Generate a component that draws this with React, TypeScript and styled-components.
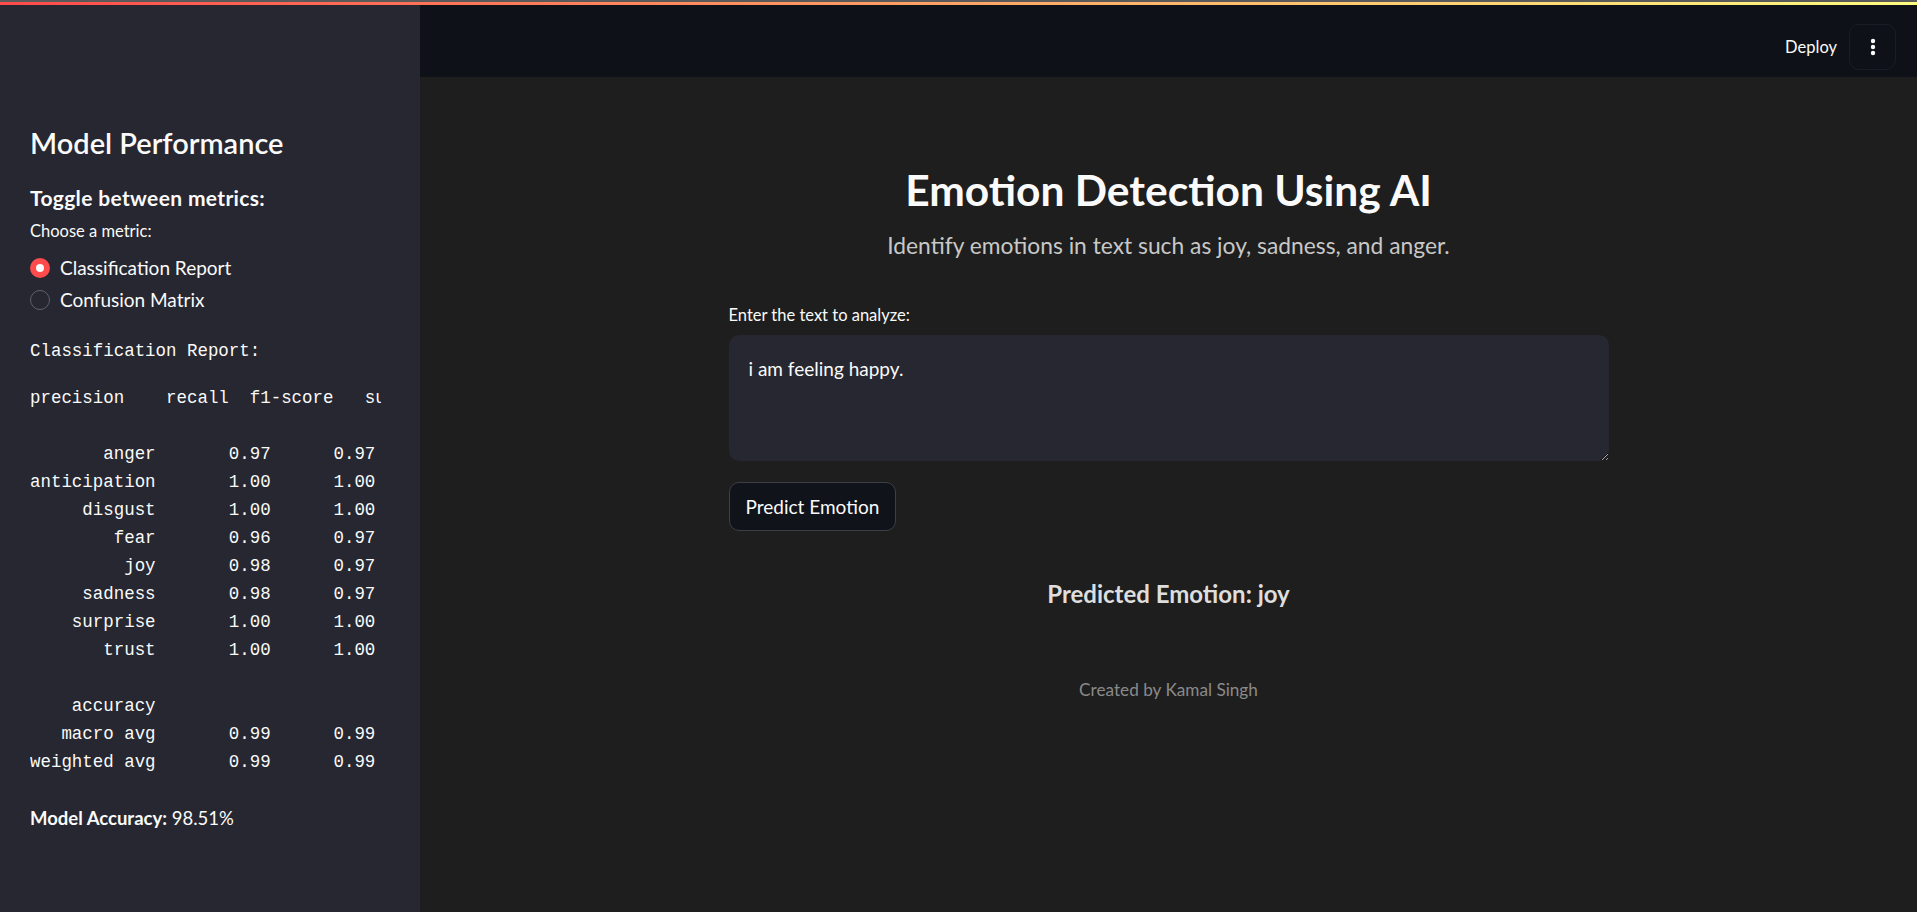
import React, { useState } from "react";
import styled, { createGlobalStyle } from "styled-components";

const GlobalStyle = createGlobalStyle`
  html, body {
    margin: 0;
    padding: 0;
    background: #1e1e1e;
    overflow: hidden;
  }
  * { box-sizing: border-box; }
`;

const SANS = `Lato, "Open Sans", "Noto Sans", sans-serif`;
const MONO = `"Liberation Mono", "DejaVu Sans Mono", monospace`;

const Page = styled.div`
  width: 1917px;
  height: 912px;
  display: flex;
  flex-direction: column;
  font-family: ${SANS};
  color: #fafafa;
`;

const Decoration = styled.div`
  height: 5px;
  flex: 0 0 5px;
  border-top: 2px solid #5a5a5a;
  background: linear-gradient(90deg, #ff4b4b, #fffd80);
`;

const Body = styled.div`
  flex: 1;
  display: flex;
  min-height: 0;
`;

const Sidebar = styled.aside`
  width: 420px;
  flex: 0 0 420px;
  background: #262730;
  padding: 120px 30px 0 30px;
  display: flex;
  flex-direction: column;
`;

const SideTitle = styled.h2`
  margin: 0;
  font-size: 29px;
  line-height: 36px;
  font-weight: 600;
  color: #fafafa;
`;

const SideSubtitle = styled.h3`
  margin: 23px 0 0;
  font-size: 21px;
  line-height: 28px;
  font-weight: 700;
  letter-spacing: 0.35px;
  color: #fafafa;
`;

const FieldLabel = styled.div<{ $top: number }>`
  margin-top: ${(p) => p.$top}px;
  font-size: 16.5px;
  line-height: 22px;
  color: #fafafa;
`;

const RadioGroup = styled.div`
  margin-top: 10px;
  display: flex;
  flex-direction: column;
`;

const RadioOption = styled.label`
  height: 32px;
  display: flex;
  align-items: center;
  gap: 10px;
  cursor: pointer;
`;

const RadioCircle = styled.span<{ $checked: boolean }>`
  width: 20px;
  height: 20px;
  border-radius: 50%;
  flex: 0 0 20px;
  display: flex;
  align-items: center;
  justify-content: center;
  background: ${(p) => (p.$checked ? "#ff4b4b" : "transparent")};
  border: ${(p) => (p.$checked ? "none" : "1.5px solid #5d5f6b")};
  &::after {
    content: "";
    width: 8px;
    height: 8px;
    border-radius: 50%;
    background: #fafafa;
    display: ${(p) => (p.$checked ? "block" : "none")};
  }
`;

const RadioText = styled.span`
  font-size: 19px;
  line-height: 32px;
  color: #fafafa;
`;

const MonoText = styled.div`
  margin-top: 21px;
  font-family: ${MONO};
  font-size: 17.45px;
  line-height: 28px;
  color: #fafafa;
  white-space: pre;
`;

const ReportPre = styled.pre`
  margin: 19px 0 0;
  width: 351px;
  overflow: hidden;
  font-family: ${MONO};
  font-size: 17.45px;
  line-height: 28px;
  color: #fafafa;
  white-space: pre;
`;

const AccuracyLine = styled.p`
  margin: 29px 0 0;
  font-size: 18.5px;
  line-height: 26px;
  color: #fafafa;
  strong { font-weight: 700; }
`;

const Main = styled.main`
  flex: 1;
  display: flex;
  flex-direction: column;
  background: #1e1e1e;
  min-width: 0;
`;

const Header = styled.header`
  height: 72px;
  flex: 0 0 72px;
  background: #0e1117;
  display: flex;
  justify-content: flex-end;
  align-items: flex-start;
  padding: 19px 21px 0 0;
  gap: 12px;
`;

const DeployButton = styled.button`
  height: 46px;
  background: transparent;
  border: none;
  padding: 0;
  font-family: ${SANS};
  font-size: 16.5px;
  line-height: 46px;
  color: #fafafa;
  cursor: pointer;
`;

const MenuButton = styled.button`
  width: 47px;
  height: 46px;
  border-radius: 10px;
  border: 1.5px solid #1a1d25;
  background: #0e1117;
  display: flex;
  align-items: center;
  justify-content: center;
  padding: 0;
  cursor: pointer;
`;

const Content = styled.div`
  width: 880px;
  margin: 0 auto;
  padding-top: 88px;
  display: flex;
  flex-direction: column;
`;

const Title = styled.h1`
  margin: 0;
  text-align: center;
  font-size: 42.5px;
  line-height: 50px;
  font-weight: 700;
  color: #fafafa;
`;

const Subtitle = styled.p`
  margin: 15px 0 0;
  text-align: center;
  font-size: 22.8px;
  line-height: 30px;
  color: #c8c8c8;
`;

const TextArea = styled.textarea`
  margin-top: 9px;
  width: 100%;
  height: 126px;
  border: none;
  outline: none;
  border-radius: 10px;
  background: #262730;
  color: #fafafa;
  padding: 20px;
  font-family: ${SANS};
  font-size: 19px;
  line-height: 28px;
  resize: vertical;
  color-scheme: dark;
`;

const PrimaryRow = styled.div`
  margin-top: 21px;
  display: flex;
`;

const ActionButton = styled.button`
  height: 49px;
  padding: 0 16px;
  border-radius: 10px;
  border: 1px solid #3d3f47;
  background: #10131a;
  color: #fafafa;
  font-family: ${SANS};
  font-size: 19px;
  cursor: pointer;
`;

const Result = styled.h3`
  margin: 47px 0 0;
  text-align: center;
  font-size: 24px;
  line-height: 32px;
  font-weight: 700;
  color: #dedede;
`;

const Footer = styled.p`
  margin: 67px 0 0;
  text-align: center;
  font-size: 17.2px;
  line-height: 26px;
  color: #8a8a8a;
`;

const rows: [string, number, number, number, number][] = [
  ["anger", 0.97, 0.97, 0.97, 541],
  ["anticipation", 1.0, 1.0, 1.0, 498],
  ["disgust", 1.0, 1.0, 1.0, 512],
  ["fear", 0.96, 0.97, 0.96, 534],
  ["joy", 0.98, 0.97, 0.97, 527],
  ["sadness", 0.98, 0.97, 0.97, 519],
  ["surprise", 1.0, 1.0, 1.0, 506],
  ["trust", 1.0, 1.0, 1.0, 493],
];

const padL = (s: string, n: number) => (s.length >= n ? s : " ".repeat(n - s.length) + s);

const line = (name: string, p: number | null, r: number | null, f: number, s: number) =>
  padL(name, 12) +
  " " +
  " " + padL(p === null ? "" : p.toFixed(2), 9) +
  " " + padL(r === null ? "" : r.toFixed(2), 9) +
  " " + padL(f.toFixed(2), 9) +
  " " + padL(String(s), 9);

const total = rows.reduce((a, r) => a + r[4], 0);

const report = [
  "precision    recall  f1-score   support",
  "",
  ...rows.map((r) => line(r[0], r[1], r[2], r[3], r[4])),
  "",
  line("accuracy", null, null, 0.99, total),
  line("macro avg", 0.99, 0.99, 0.99, total),
  line("weighted avg", 0.99, 0.99, 0.99, total),
].join("\n");

export default function App() {
  const [metric, setMetric] = useState("report");
  const [text, setText] = useState("i am feeling happy.");

  return (
    <Page>
      <GlobalStyle />
      <Decoration />
      <Body>
        <Sidebar>
          <SideTitle>Model Performance</SideTitle>
          <SideSubtitle>Toggle between metrics:</SideSubtitle>
          <FieldLabel $top={8}>Choose a metric:</FieldLabel>
          <RadioGroup>
            <RadioOption onClick={() => setMetric("report")}>
              <RadioCircle $checked={metric === "report"} />
              <RadioText>Classification Report</RadioText>
            </RadioOption>
            <RadioOption onClick={() => setMetric("matrix")}>
              <RadioCircle $checked={metric === "matrix"} />
              <RadioText>Confusion Matrix</RadioText>
            </RadioOption>
          </RadioGroup>
          <MonoText>Classification Report:</MonoText>
          <ReportPre>{report}</ReportPre>
          <AccuracyLine>
            <strong>Model Accuracy:</strong> 98.51%
          </AccuracyLine>
        </Sidebar>
        <Main>
          <Header>
            <DeployButton>Deploy</DeployButton>
            <MenuButton aria-label="Main menu">
              <svg width="6" height="18" viewBox="0 0 6 18">
                <circle cx="3" cy="3" r="2.2" fill="#fafafa" />
                <circle cx="3" cy="9" r="2.2" fill="#fafafa" />
                <circle cx="3" cy="15" r="2.2" fill="#fafafa" />
              </svg>
            </MenuButton>
          </Header>
          <Content>
            <Title>Emotion Detection Using AI</Title>
            <Subtitle>Identify emotions in text such as joy, sadness, and anger.</Subtitle>
            <FieldLabel $top={44}>Enter the text to analyze:</FieldLabel>
            <TextArea value={text} onChange={(e) => setText(e.target.value)} />
            <PrimaryRow>
              <ActionButton>Predict Emotion</ActionButton>
            </PrimaryRow>
            <Result>Predicted Emotion: joy</Result>
            <Footer>Created by Kamal Singh</Footer>
          </Content>
        </Main>
      </Body>
    </Page>
  );
}
